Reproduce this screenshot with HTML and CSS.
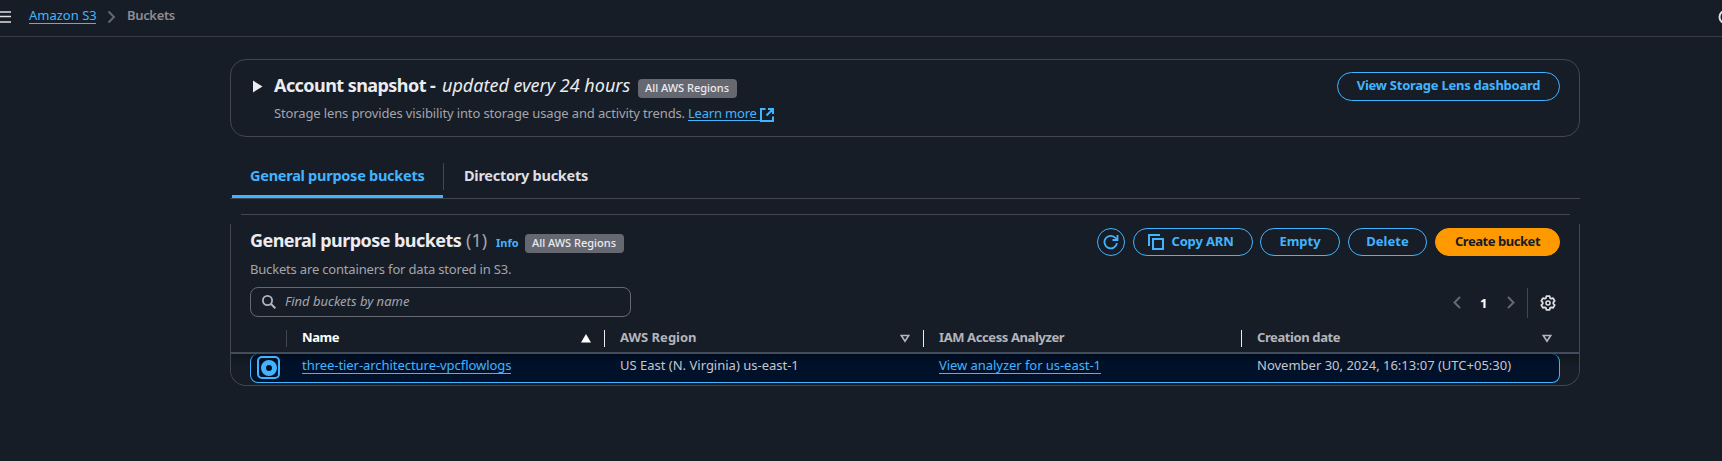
FILE: index.html
```html
<!DOCTYPE html>
<html lang="en">
<head>
<meta charset="utf-8">
<title>Buckets</title>
<link rel="stylesheet" href="styles.css">
</head>
<body>
<header class="topbar">
  <svg class="menu-icon" width="11" height="14" viewBox="0 0 11 14"><path d="M0 2h11M0 6.500h11M0 12h11" stroke="#dedee3" stroke-width="1.600"/></svg>
  <a class="link crumb">Amazon S3</a>
  <svg class="crumb-sep" width="9" height="14" viewBox="0 0 9 14"><path d="M1.500 1.500L7 7l-5.500 5.500" fill="none" stroke="#656871" stroke-width="2"/></svg>
  <span class="crumb-current">Buckets</span>
  <svg class="info-icon" width="4" height="16" viewBox="0 0 4 16"><circle cx="8" cy="8" r="6.500" fill="none" stroke="#dedee3" stroke-width="2"/></svg>
</header>
<main class="content">
  <section class="snapshot">
    <svg class="expand" width="10" height="13" viewBox="0 0 10 13"><path d="M0 .5v12L9.500 6.500z" fill="#ebebf0"/></svg>
    <div class="snapshot-body">
      <div class="title-row">
        <h2 class="title snapshot-title">Account snapshot - </h2><em class="updated">updated every 24 hours</em>
        <span class="badge">All AWS Regions</span>
      </div>
      <p class="desc"><span class="desc-text">Storage lens provides visibility into storage usage and activity trends.</span>
        <a class="link learn">Learn more</a><svg class="external" width="14" height="14" viewBox="0 0 14 14"><path d="M5.500 1H1v12h12V8.500M8 1h5v5M13 1L6.500 7.500" fill="none" stroke="#42b4ff" stroke-width="2"/></svg></p>
    </div>
    <button class="btn lens"><span>View Storage Lens dashboard</span></button>
  </section>
  <nav class="tabs">
    <div class="tab active"><span>General purpose buckets</span></div>
    <div class="tab-divider"></div>
    <div class="tab second"><span>Directory buckets</span></div>
  </nav>
  <div class="panel-top"></div>
  <section class="panel">
    <div class="panel-head">
      <div class="title-row">
        <h2 class="title panel-title">General purpose buckets</h2><span class="count">(1)</span><a class="info">Info</a>
        <span class="badge">All AWS Regions</span>
      </div>
      <div class="actions">
        <button class="btn refresh"><svg width="16" height="16" viewBox="0 0 16 16"><path d="M14 9.200A6.300 6.300 0 1 1 12.600 4L14 5.500M14.500 1v5H9.500" fill="none" stroke="#42b4ff" stroke-width="1.800"/></svg></button>
        <button class="btn copy"><svg width="16" height="16" viewBox="0 0 16 16"><path d="M1 12V1h11M5 5h10v10H5z" fill="none" stroke="#42b4ff" stroke-width="2"/></svg><span>Copy ARN</span></button>
        <button class="btn empty"><span>Empty</span></button>
        <button class="btn delete"><span>Delete</span></button>
        <button class="btn create"><span>Create bucket</span></button>
      </div>
    </div>
    <p class="panel-desc"><span>Buckets are containers for data stored in S3.</span></p>
    <div class="tools">
      <div class="search"><svg width="14" height="14" viewBox="0 0 14 14"><circle cx="5.500" cy="5.500" r="4.600" fill="none" stroke="#b4b4bb" stroke-width="1.800"/><path d="M9 9l4.300 4.300" stroke="#b4b4bb" stroke-width="2"/></svg><span>Find buckets by name</span></div>
      <div class="pager">
        <svg width="8" height="13" viewBox="0 0 8 13"><path d="M7 1L1.500 6.500 7 12" fill="none" stroke="#656871" stroke-width="2"/></svg>
        <b>1</b>
        <svg width="8" height="13" viewBox="0 0 8 13"><path d="M1 1l5.500 5.500L1 12" fill="none" stroke="#656871" stroke-width="2"/></svg>
        <i class="pager-divider"></i>
        <svg width="16" height="16" viewBox="0 0 16 16"><path d="M6.400 1.200h3.200l.5 1.900 1.100.6 1.900-.5 1.600 2.700-1.400 1.400v1.400l1.400 1.400-1.600 2.700-1.900-.5-1.100.6-.5 1.900H6.400l-.5-1.900-1.100-.6-1.900.5-1.600-2.700 1.400-1.400V7.300L1.300 5.900l1.600-2.700 1.900.5 1.100-.6z" fill="none" stroke="#dedee3" stroke-width="1.800" stroke-linejoin="round"/><circle cx="8" cy="8" r="2" fill="none" stroke="#dedee3" stroke-width="1.600"/></svg>
      </div>
    </div>
    <div class="grid thead">
      <div class="cell pick"></div>
      <div class="cell name"><span>Name</span><svg width="10" height="9" viewBox="0 0 10 9"><path d="M5 0l5 8.500H0z" fill="#fff"/></svg></div>
      <div class="cell region"><span>AWS Region</span><svg width="10" height="9" viewBox="0 0 10 9"><path d="M1.300 1.500h7.400L5 7.300z" fill="none" stroke="#b4b4bb" stroke-width="1.600"/></svg></div>
      <div class="cell iam"><span>IAM Access Analyzer</span></div>
      <div class="cell date"><span>Creation date</span><svg width="10" height="9" viewBox="0 0 10 9"><path d="M1.300 1.500h7.400L5 7.300z" fill="none" stroke="#b4b4bb" stroke-width="1.600"/></svg></div>
    </div>
    <div class="tbody">
      <div class="grid row">
        <div class="radio"><i></i></div>
        <div><a class="link bucket">three-tier-architecture-vpcflowlogs</a></div>
        <div><span class="region-text">US East (N. Virginia) us-east-1</span></div>
        <div><a class="link analyzer">View analyzer for us-east-1</a></div>
        <div><span class="date-text">November 30, 2024, 16:13:07 (UTC+05:30)</span></div>
      </div>
    </div>
  </section>
</main>
</body>
</html>
```
FILE: styles.css
```css
* { box-sizing: border-box; }
body {
  margin: 0;
  height: 461px;
  overflow: hidden;
  background: #161d26;
  color: #c6c6cd;
  font: 13px/20px "Noto Sans", "Open Sans", sans-serif;
  white-space: nowrap;
}
h2, p { margin: 0; }
svg { display: block; flex: none; }
.link { color: #42b4ff; border-bottom: 1px solid #42b4ff; line-height: 16px; display: inline-block; }

.topbar { display: flex; height: 37px; padding-top: 8px; border-bottom: 1px solid #353a44; }
.menu-icon { margin: 2px 18px 0 0; }
.crumb { height: 16px; width: 67px; line-height: 14px; }
.crumb-sep { margin: 2px 11px 0; }
.crumb-current { color: #8c8c94; font-weight: 600; line-height: 14px; letter-spacing: -.35px; }
.info-icon { margin: 1px 0 0 auto; }

.content { width: 1350px; margin: 22px 0 0 230px; }
.snapshot { display: flex; height: 78px; padding: 12px 19px 0 22px; border: 1px solid #424650; border-radius: 16px; }
.expand { margin: 8px 11px 0 0; }
.snapshot-body { flex: 1; }
.title-row { display: flex; height: 28px; }
.title { color: #ebebf0; font-size: 18px; font-weight: 700; line-height: 26px; letter-spacing: -.56px; white-space: pre; }
.snapshot-title { width: 168px; }
.updated { width: 189px; color: #ebebf0; font-size: 18px; line-height: 26px; }
.badge { width: 99px; height: 19px; margin: 7px 0 0 7px; padding-left: 7px; border-radius: 4px; background: #656871; color: #ebebf0; font-size: 11px; font-weight: 500; line-height: 18px; }
.desc { display: flex; height: 20px; color: #a4a4ad; }
.desc-text { width: 414px; line-height: 27px; letter-spacing: -.13px; }
.learn { width: 72px; height: 21px; line-height: 27px; letter-spacing: -.2px; }
.external { margin: 8px 0 0; }

.btn { display: flex; align-items: center; justify-content: center; height: 29px; padding: 0; border: 1px solid #42b4ff; border-radius: 15px; background: transparent; color: #42b4ff; font: 700 13px/20px "Noto Sans", sans-serif; }
.btn span { padding-bottom: 3px; }
.lens { width: 223px; letter-spacing: -.25px; }

.tabs { display: flex; height: 62px; padding-top: 26px; border-bottom: 1px solid #424650; font-size: 14.500px; font-weight: 700; letter-spacing: -.26px; }
.tab { line-height: 24px; color: #dedee3; }
.tab.active { width: 211px; height: 35px; margin-left: 2px; padding-left: 18px; border-bottom: 3px solid #42b4ff; color: #42b4ff; }
.tab-divider { width: 1px; height: 27px; background: #424650; }
.tab.second { padding-left: 20px; }

.panel-top { height: 1px; margin: 15px 10px 9px 11px; background: #424650; }
.panel { height: 162px; border: 1px solid #424650; border-top: 0; border-radius: 0 0 16px 16px; overflow: hidden; }
.panel-head { display: flex; justify-content: space-between; height: 33px; padding: 4px 19px 0; }
.panel-head .title-row { height: 29px; }
.panel-title { width: 216px; }
.panel-head .title { line-height: 25px; }
.count { width: 30px; color: #a4a4ad; font-size: 18px; line-height: 25px; }
.info { width: 22px; color: #42b4ff; font-size: 11px; font-weight: 700; line-height: 30px; }
.panel-head .badge { margin: 6px 0 0 7px; }
.actions { display: flex; height: 28px; }
.actions .btn { height: 28px; }
.refresh { width: 28px; margin-right: 8px; }
.copy { width: 120px; gap: 7px; margin-right: 7px; padding-right: 4px; letter-spacing: -.15px; }
.empty { width: 80px; margin-right: 8px; }
.delete { width: 79px; margin-right: 8px; }
.create { width: 125px; border-color: #ff9900; background: #ff9900; color: #161d26; letter-spacing: -.45px; }
.panel-desc { height: 30px; padding-left: 19px; color: #a4a4ad; line-height: 24px; letter-spacing: -.18px; }
.tools { display: flex; justify-content: space-between; height: 30px; padding: 0 23px 0 19px; }
.search { display: flex; width: 381px; height: 30px; padding: 0 0 0 11px; border: 1px solid #656871; border-radius: 8px; color: #a4a4ad; font-style: italic; line-height: 27px; }
.search svg { margin: 7px 9px 0 0; }
.pager { display: flex; align-items: center; height: 31px; color: #fff; }
.pager b { width: 8px; margin: 0 19px 0 19px; line-height: 28px; }
.pager-divider { width: 1px; height: 30px; margin: 0 12px 0 12px; background: #424650; }

.grid { display: grid; grid-template-columns: 37px 318px 319px 318px 318px; }
.thead { height: 37px; padding: 13px 0 0 19px; border-bottom: 2px solid #414d5c; color: #b4b4bb; font-weight: 700; }
.cell { display: flex; justify-content: space-between; height: 17px; padding: 0 13px 0 15px; border-right: 1px solid #ebebf0; line-height: 15px; }
.cell svg { margin-top: 4px; }
.cell.pick { border-color: #424650; }
.cell.date { padding-right: 8px; border: 0; }
.cell.name { color: #fff; }
.cell.name, .cell.iam, .cell.date { letter-spacing: -.4px; }
.tbody { height: 33px; padding: 0 19px; background: linear-gradient(#10161e, #161d26 14px); }
.row { height: 29px; border: 1px solid #42b4ff; border-top: 0; border-radius: 8px; background: linear-gradient(#000c1e, #001129 10px); color: #c6c6cd; }
.row > div:not(.radio) { padding-left: 14px; }
.row .link { height: 20px; line-height: 23px; letter-spacing: -.05px; }
.row span { line-height: 23px; }
.radio { display: flex; align-items: center; justify-content: center; width: 23px; height: 23px; margin: 2px 0 0 6px; border: 2px solid #42b4ff; border-radius: 5px; }
.radio i { width: 16px; height: 16px; border: 5px solid #42b4ff; border-radius: 50%; }
```
